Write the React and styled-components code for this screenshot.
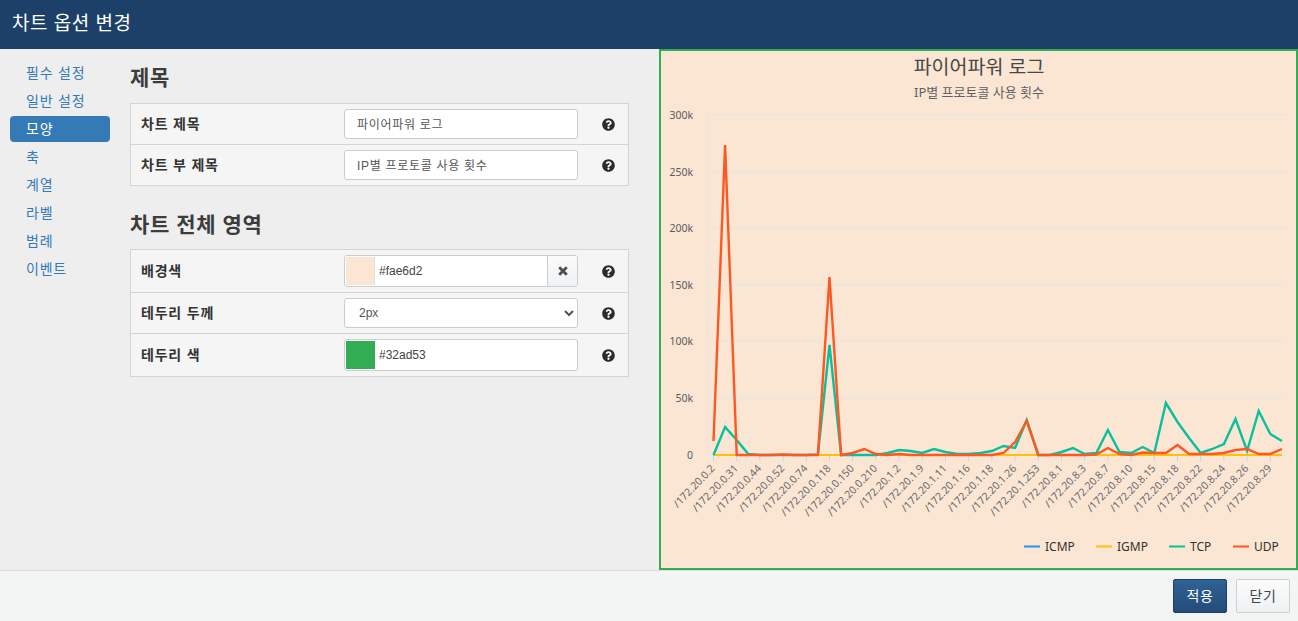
import React from "react";
import styled, { createGlobalStyle } from "styled-components";
import { FaQuestionCircle, FaTimes } from "react-icons/fa";

const FONT = `"Liberation Sans", "Noto Sans CJK KR", sans-serif`;
const CHART_FONT = `"Noto Sans", "Noto Sans CJK KR", sans-serif`;

const Global = createGlobalStyle`
  html, body { margin: 0; padding: 0; height: 100%; }
  body { font-family: ${FONT}; font-size: 13px; color: #333; background: #eee; }
  * { box-sizing: border-box; }
`;

const Page = styled.div`
  display: flex;
  flex-direction: column;
  width: 100%;
  height: 100vh;
  overflow: hidden;
`;
const Header = styled.header`
  flex: 0 0 49px;
  display: flex;
  align-items: center;
  padding: 0 0 6px 12px;
  background: #1c4067;
  color: #fff;
  font-size: 19px;
  letter-spacing: 0.5px;
`;
const Main = styled.main`
  flex: 1;
  display: flex;
  min-height: 0;
  background: #eee;
`;
const Nav = styled.nav`
  flex: 0 0 130px;
  padding: 10px 20px 0 10px;
  display: flex;
  flex-direction: column;
`;
const NavItem = styled.a`
  margin-bottom: ${(p) => (p.$active ? "1px" : "0")};
  margin-top: ${(p) => (p.$active ? "1px" : "0")};
  flex: 0 0 ${(p) => (p.$active ? "26px" : "28px")};
  display: flex;
  align-items: center;
  padding: 0 0 3px 16px;
  border-radius: 4px;
  font-size: 14px;
  letter-spacing: 0.8px;
  color: ${(p) => (p.$active ? "#fff" : "#337ab7")};
  background: ${(p) => (p.$active ? "#337ab7" : "transparent")};
`;
const Content = styled.section`
  flex: 0 0 499px;
  padding-top: 15px;
`;
const Heading = styled.h3`
  margin: 0 0 ${(p) => p.$gap}px;
  font-size: 21px;
  line-height: 28px;
  font-weight: 700;
  letter-spacing: 0.6px;
  color: #3c3c3c;
`;
const Table = styled.div`
  border: 1px solid #d4d4d4;
  background: #f5f5f5;
  margin-bottom: ${(p) => p.$gap || 0}px;
`;
const Row = styled.div`
  display: flex;
  align-items: center;
  height: ${(p) => p.$h}px;
  border-top: ${(p) => (p.$first ? "none" : "1px solid #d4d4d4")};
  padding-left: 10px;
`;
const Label = styled.label`
  flex: 0 0 203px;
  padding-bottom: 2px;
  font-size: 14px;
  letter-spacing: 0.8px;
  font-weight: 700;
  color: #333;
`;
const TextInput = styled.input`
  width: 234px;
  height: 30px;
  padding: 0 12px 1px;
  border: 1px solid #ccc;
  border-radius: 3px;
  background: #fff;
  font-family: ${FONT};
  font-size: 12px;
  letter-spacing: 0.7px;
  color: #555;
  outline: none;
`;
const Select = styled.select`
  width: 234px;
  height: 30px;
  padding: 0 10px;
  border: 1px solid #ccc;
  border-radius: 3px;
  background-color: #fff;
  font-family: ${FONT};
  font-size: 12px;
  color: #555;
  outline: none;
`;
const ColorGroup = styled.div`
  width: 234px;
  height: ${(p) => p.$h}px;
  display: flex;
  border: 1px solid #ccc;
  border-radius: 3px;
  background: #fff;
  overflow: hidden;
`;
const Swatch = styled.div`
  flex: 0 0 29px;
  margin: 1px 0 1px 1px;
  border-right: 1px solid ${(p) => (p.$border ? "#ddd" : "transparent")};
  background: ${(p) => p.$color};
`;
const ColorValue = styled.div`
  flex: 1;
  display: flex;
  align-items: center;
  padding: 0 0 1px 4px;
  font-size: 12px;
  color: #444;
`;
const ClearButton = styled.button`
  flex: 0 0 30px;
  display: flex;
  align-items: center;
  justify-content: center;
  padding: 0;
  border: none;
  border-left: 1px solid #ccc;
  background: linear-gradient(#fbfbfb, #eef1f4);
  color: #4a4a4a;
  font-size: 12px;
  svg {
    stroke: currentColor;
    stroke-width: 30px;
  }
`;
const Help = styled.span`
  display: flex;
  margin-left: 24px;
  color: #2b2b2b;
  font-size: 13px;
`;
const ChartPanel = styled.div`
  flex: 1;
  margin-left: 30px;
  border: 2px solid #32ad53;
  background: #fae6d2;
  min-width: 0;
`;
const ChartSvg = styled.svg`
  display: block;
  width: 100%;
  height: 100%;
  font-family: ${CHART_FONT};
`;
const Footer = styled.footer`
  flex: 0 0 51px;
  display: flex;
  justify-content: flex-end;
  align-items: flex-start;
  gap: 9px;
  padding: 8px 8px 0 0;
  border-top: 1px solid #ddd;
  background: #f3f5f5;
`;
const Button = styled.button`
  width: 54px;
  height: 34px;
  padding: 0 0 2px;
  border-radius: 2px;
  font-family: ${FONT};
  font-size: 14px;
  letter-spacing: 0.6px;
  border: 1px solid ${(p) => (p.$primary ? "#1c4067" : "#d0d0d0")};
  color: ${(p) => (p.$primary ? "#fff" : "#444")};
  background: ${(p) =>
    p.$primary
      ? "linear-gradient(#2f6295, #234b78)"
      : "linear-gradient(#fbfbfb, #eef1f4)"};
`;

const HelpIcon = () => (
  <Help>
    <FaQuestionCircle />
  </Help>
);

const X0 = 713.5;
const STEP = 11.6;
const TCP = [455,427,440,454,455,455,455,455,455,454.5,345,455,455,455,455,453,450,451,453,449,452,454,454,453,451,446,448,420,455,455,452,448,454,453,430,452,453,447,453,403,422,438,453,449,444,419,451,411,434,441];
const UDP = [441,145,455,455,455,455,454.5,455,455,455,277,455,453,449,454,455,454,455,455,455,455,455,455,455,455,453,442,421,455,455,455,455,455,454.5,448,454,455,452.5,453,453,445,454,454,454,453,450,449,454,454,449];
const LABELS = ["0.2","0.31","0.44","0.52","0.74","0.118","0.150","0.210","1.2","1.9","1.11","1.16","1.18","1.26","1.253","8.1","8.3","8.7","8.10","8.15","8.18","8.22","8.24","8.26","8.29"];
const Y_TICKS = [["300k",115],["250k",172],["200k",228],["150k",285],["100k",341],["50k",398],["0",455]];
const LEGEND = [
  ["ICMP", "#2196f3", 1024],
  ["IGMP", "#ffc107", 1096],
  ["TCP", "#0abf9f", 1169],
  ["UDP", "#ff5722", 1233],
];
const pts = (arr) => arr.map((y, i) => `${(X0 + i * STEP).toFixed(1)},${y}`).join(" ");
const flat = Array(50).fill(455);

const Chart = () => (
  <ChartSvg viewBox="661 51 635 517" preserveAspectRatio="none">
    <text x="979" y="74" textAnchor="middle" fontSize="19.5" fill="#464646">파이어파워 로그</text>
    <text x="979" y="97" textAnchor="middle" fontSize="13" fill="#5f5f66">IP별 프로토콜 사용 횟수</text>
    {Y_TICKS.map(([t, y]) => (
      <g key={t}>
        <line x1="708" x2="1287" y1={y} y2={y} stroke="#e3e5ec" strokeWidth="1" />
        <text x="693" y={y + 4} textAnchor="end" fontSize="10.5" fill="#5a5a62">{t}</text>
      </g>
    ))}
    <line x1="708.5" x2="708.5" y1="115" y2="455" stroke="#e3e5ec" />
    {LABELS.map((l, i) => {
      const x = X0 + i * 2 * STEP;
      return (
        <g key={l}>
          <line x1={x} x2={x} y1="456" y2="461" stroke="#c6d3ec" />
          <text
            transform={`translate(${x + 2} 469) rotate(-46)`}
            textAnchor="end"
            fontSize="10.5"
            fill="#6a6a70"
          >{`/172.20.${l}`}</text>
        </g>
      );
    })}
    <polyline points={pts(flat)} fill="none" stroke="#2196f3" strokeWidth="1.8" />
    <polyline points={pts(flat)} fill="none" stroke="#ffc107" strokeWidth="1.8" />
    <polyline points={pts(TCP)} fill="none" stroke="#0abf9f" strokeWidth="2.4" />
    <polyline points={pts(UDP)} fill="none" stroke="#ff5722" strokeWidth="2.4" />
    {LEGEND.map(([n, c, x]) => (
      <g key={n}>
        <line x1={x} x2={x + 16} y1="546.5" y2="546.5" stroke={c} strokeWidth="2" />
        <text x={x + 21} y="551" fontSize="12" fill="#333">{n}</text>
      </g>
    ))}
  </ChartSvg>
);

const NAV = ["필수 설정", "일반 설정", "모양", "축", "계열", "라벨", "범례", "이벤트"];

export default function App() {
  return (
    <Page>
      <Global />
      <Header>차트 옵션 변경</Header>
      <Main>
        <Nav>
          {NAV.map((n) => (
            <NavItem key={n} $active={n === "모양"}>{n}</NavItem>
          ))}
        </Nav>
        <Content>
          <Heading $gap={11}>제목</Heading>
          <Table $gap={25}>
            <Row $first $h={40}>
              <Label>차트 제목</Label>
              <TextInput readOnly value="파이어파워 로그" />
              <HelpIcon />
            </Row>
            <Row $h={41}>
              <Label>차트 부 제목</Label>
              <TextInput readOnly value="IP별 프로토콜 사용 횟수" />
              <HelpIcon />
            </Row>
          </Table>
          <Heading $gap={10}>차트 전체 영역</Heading>
          <Table>
            <Row $first $h={42}>
              <Label>배경색</Label>
              <ColorGroup $h={32}>
                <Swatch $color="#fae6d2" $border />
                <ColorValue>#fae6d2</ColorValue>
                <ClearButton><FaTimes /></ClearButton>
              </ColorGroup>
              <HelpIcon />
            </Row>
            <Row $h={41}>
              <Label>테두리 두께</Label>
              <Select defaultValue="2px">
                <option>1px</option>
                <option>2px</option>
                <option>3px</option>
              </Select>
              <HelpIcon />
            </Row>
            <Row $h={43}>
              <Label>테두리 색</Label>
              <ColorGroup $h={32}>
                <Swatch $color="#32ad53" />
                <ColorValue>#32ad53</ColorValue>
              </ColorGroup>
              <HelpIcon />
            </Row>
          </Table>
        </Content>
        <ChartPanel>
          <Chart />
        </ChartPanel>
      </Main>
      <Footer>
        <Button $primary>적용</Button>
        <Button>닫기</Button>
      </Footer>
    </Page>
  );
}
